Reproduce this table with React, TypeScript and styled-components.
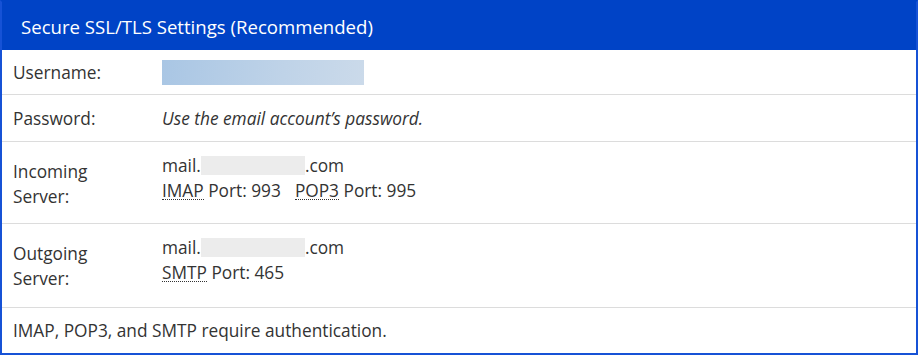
import React from "react";
import styled, { createGlobalStyle } from "styled-components";

const Global = createGlobalStyle`
  html, body { margin: 0; padding: 0; background: #fff; }
  body { font-family: "Open Sans", "Noto Sans", sans-serif; }
`;

const Panel = styled.div`
  width: 918px;
  height: 355px;
  box-sizing: border-box;
  border: 2px solid #1652d6;
  border-top-color: #0043c6;
  display: flex;
  flex-direction: column;
  background: #fff;
`;

const Header = styled.div`
  background: #0043c6;
  color: #fff;
  height: 48px;
  display: flex;
  align-items: center;
  padding-left: 19px;
  font-size: 18.6px;
  flex-shrink: 0;
`;

const Row = styled.div<{ $h: number; $last?: boolean }>`
  display: grid;
  grid-template-columns: 149px 1fr;
  align-items: ${(p) => (p.$h > 60 ? "start" : "center")};
  height: ${(p) => p.$h}px;
  box-sizing: border-box;
  padding: ${(p) => (p.$h > 60 ? "17px" : "0")} 0 0 11px;
  border-bottom: ${(p) => (p.$last ? "none" : "1px solid #dcdcdc")};
  color: #333;
  font-size: 17.3px;
  line-height: 25px;
`;

const Label = styled.div``;

const Value = styled.div<{ $italic?: boolean }>`
  font-style: ${(p) => (p.$italic ? "italic" : "normal")};
`;

const Line = styled.div<{ $first?: boolean }>`
  margin-top: ${(p) => (p.$first ? "-6px" : "0")};
`;

const Blur = styled.span`
  display: inline-block;
  width: 202px;
  height: 25px;
  vertical-align: middle;
  background: linear-gradient(100deg, #a9c6e4 0%, #bfd3e8 60%, #cbdaea 100%);
  filter: blur(0.4px);
`;

const Hidden = styled.span`
  display: inline-block;
  width: 104px;
  height: 19px;
  vertical-align: -3px;
  background: #ececec;
`;

const Abbr = styled.abbr`
  text-decoration: none;
  border-bottom: 1px dotted #333;
  line-height: 17px;
  display: inline-block;
`;

const Gap = styled.span`
  display: inline-block;
  width: 14px;
`;

const Note = styled.div`
  grid-column: 1 / -1;
`;

export default function App() {
  return (
    <>
      <Global />
      <Panel>
        <Header>Secure SSL/TLS Settings (Recommended)</Header>
        <Row $h={45}>
          <Label>Username:</Label>
          <Value>
            <Blur />
          </Value>
        </Row>
        <Row $h={47}>
          <Label>Password:</Label>
          <Value $italic>Use the email account’s password.</Value>
        </Row>
        <Row $h={82}>
          <Label>
            Incoming
            <br />
            Server:
          </Label>
          <Value>
            <Line $first>
              mail.
              <Hidden />
              .com
            </Line>
            <Line>
              <Abbr title="Internet Message Access Protocol">IMAP</Abbr> Port: 993
              <Gap />
              <Abbr title="Post Office Protocol 3">POP3</Abbr> Port: 995
            </Line>
          </Value>
        </Row>
        <Row $h={84}>
          <Label>
            Outgoing
            <br />
            Server:
          </Label>
          <Value>
            <Line $first>
              mail.
              <Hidden />
              .com
            </Line>
            <Line>
              <Abbr title="Simple Mail Transfer Protocol">SMTP</Abbr> Port: 465
            </Line>
          </Value>
        </Row>
        <Row $h={45} $last>
          <Note>IMAP, POP3, and SMTP require authentication.</Note>
        </Row>
      </Panel>
    </>
  );
}
